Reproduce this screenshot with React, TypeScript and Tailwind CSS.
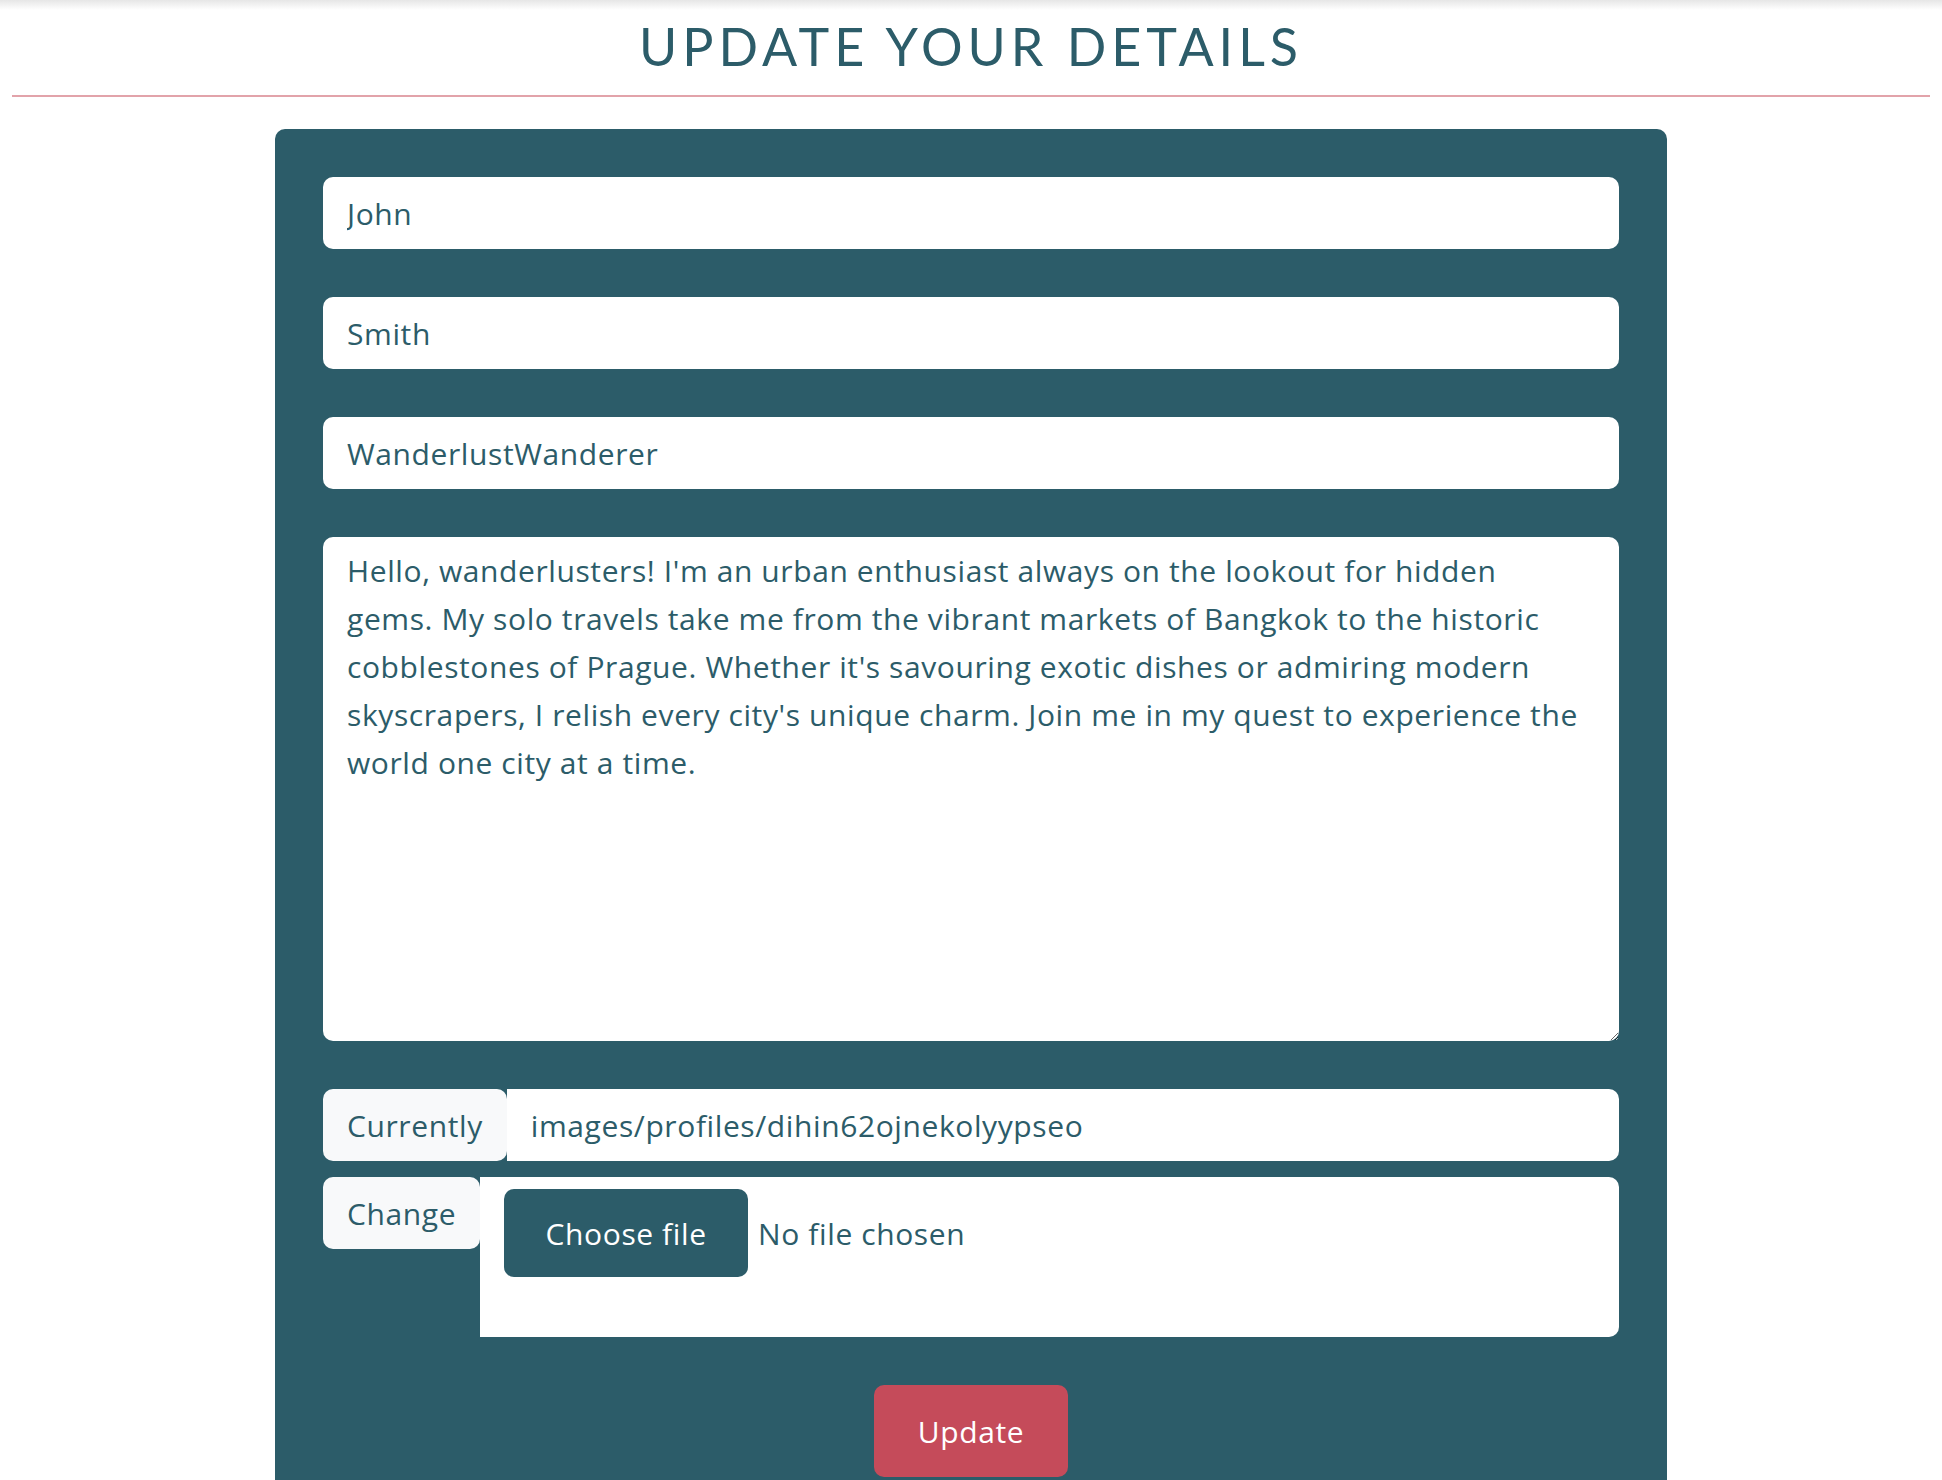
import React from "react";

const bio =
  "Hello, wanderlusters! I'm an urban enthusiast always on the lookout for hidden\ngems. My solo travels take me from the vibrant markets of Bangkok to the historic\ncobblestones of Prague. Whether it's savouring exotic dishes or admiring modern\nskyscrapers, I relish every city's unique charm. Join me in my quest to experience the\nworld one city at a time.";

function TextInput({ value }: { value: string }) {
  return (
    <input
      type="text"
      defaultValue={value}
      className="w-full h-[72px] rounded-[10px] bg-white px-6 text-[30px] tracking-[0.6px] text-[#2c5c69] outline-none"
    />
  );
}

export default function App() {
  return (
    <div className="min-h-screen bg-white font-['Open_Sans',sans-serif] text-[#2c5c69]">
      <div className="h-[10px] bg-gradient-to-b from-[#e6e6e6] to-white" />
      <h1 className="text-center font-['Lato',sans-serif] text-[52px] leading-[72px] tracking-[5px]">
        UPDATE YOUR DETAILS
      </h1>
      <div className="mx-[12px] mt-[13px] h-[2px] bg-[#e2a3aa]" />

      <form className="mx-auto mt-[32px] w-[1392px] rounded-t-[10px] bg-[#2c5c69] px-12 pt-12 pb-10 flex flex-col gap-12 tracking-[0.6px]">
        <TextInput value="John" />
        <TextInput value="Smith" />
        <TextInput value="WanderlustWanderer" />

        <textarea
          defaultValue={bio}
          className="block w-full h-[504px] rounded-[10px] bg-white px-6 py-[10px] text-[30px] leading-[48px] tracking-[0.6px] text-[#2c5c69] outline-none whitespace-pre"
        />

        <div className="flex flex-col gap-4">
          <div className="flex h-[72px]">
            <span className="flex items-center rounded-[10px] bg-[#f8f9fa] px-6 text-[30px]">
              Currently
            </span>
            <div className="flex flex-1 items-center rounded-r-[10px] bg-white px-6 text-[30px]">
              images/profiles/dihin62ojnekolyypseo
            </div>
          </div>

          <div className="flex items-start">
            <span className="flex h-[72px] items-center rounded-[10px] bg-[#f8f9fa] px-6 text-[30px]">
              Change
            </span>
            <div className="flex h-[160px] flex-1 items-start rounded-r-[10px] bg-white pl-6 pt-3">
              <button
                type="button"
                className="h-[88px] w-[244px] rounded-[10px] bg-[#2c5c69] text-[30px] tracking-[0.6px] text-white"
              >
                Choose file
              </button>
              <span className="ml-[10px] flex h-[88px] items-center text-[30px]">
                No file chosen
              </span>
            </div>
          </div>
        </div>

        <div className="flex justify-center">
          <button
            type="submit"
            className="h-[92px] w-[194px] rounded-[10px] bg-[#c54b5a] text-[30px] tracking-[0.6px] text-white"
          >
            Update
          </button>
        </div>
      </form>
    </div>
  );
}
